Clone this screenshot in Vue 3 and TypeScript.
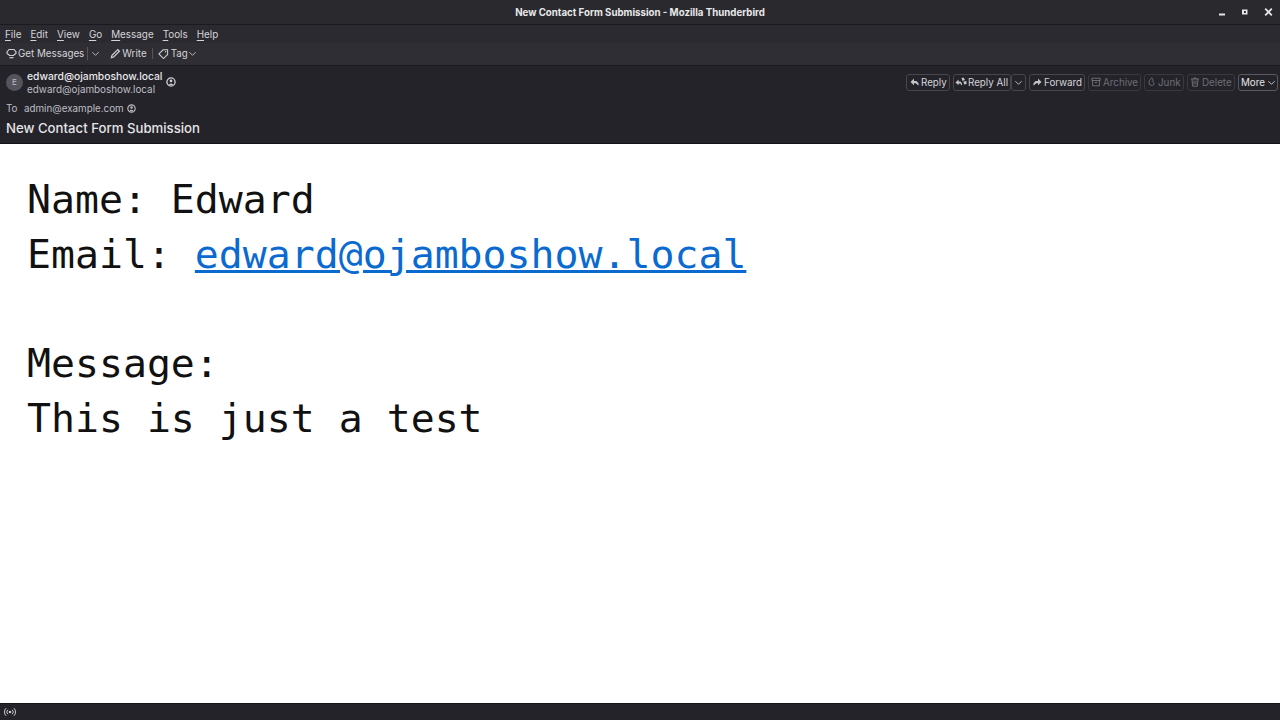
<script setup lang="ts">
const menus = [
  { a: 'F', b: 'ile' }, { a: 'E', b: 'dit' }, { a: 'V', b: 'iew' }, { a: 'G', b: 'o' },
  { a: 'M', b: 'essage' }, { a: 'T', b: 'ools' }, { a: 'H', b: 'elp' },
]
</script>

<template>
  <div class="win">
    <header class="title">
      <span class="title-text">New Contact Form Submission - Mozilla Thunderbird</span>
      <div class="wm">
        <svg width="8" height="10" viewBox="0 0 8 10"><rect x="1" y="6.500" width="6" height="2" fill="#e6e6e6"/></svg>
        <svg width="8" height="10" viewBox="0 0 8 10"><path d="M1 2.500h5.500v5H1z M3 4v2h1.800V4z" fill="#e6e6e6" fill-rule="evenodd"/></svg>
        <svg width="9" height="10" viewBox="0 0 9 10"><path d="M1.200 1.700l6.600 6.600M7.800 1.700l-6.600 6.600" stroke="#e6e6e6" stroke-width="1.800"/></svg>
      </div>
    </header>
    <nav class="menubar">
      <span v-for="m in menus" :key="m.a" class="menu"><u>{{ m.a }}</u>{{ m.b }}</span>
    </nav>
    <div class="toolbar">
      <span class="tool first">
        <svg class="ic" width="11" height="11" viewBox="0 0 11 11"><path d="M1 4 3 1.500h5L10 4v1.200L7.500 7.500h-4L1 5.200z" fill="none" stroke="#d0d0d4" stroke-width="1.200"/><path d="M3.500 9.700h4" stroke="#d0d0d4" stroke-width="1.200"/></svg>
        <span>Get Messages</span>
      </span>
      <span class="sep"></span>
      <svg class="chev" width="9" height="9" viewBox="0 0 10 10"><path d="M1.500 3.500 5 7l3.500-3.500" fill="none" stroke="#c8c8cc"/></svg>
      <span class="tool write">
        <svg class="ic" width="11" height="11" viewBox="0 0 12 12"><path d="M1.500 10.500 2.200 8 8.500 1.700l1.800 1.800L4 9.800z" fill="none" stroke="#cfcfd4" stroke-width="1.300"/></svg>
        <span>Write</span>
      </span>
      <span class="sep short"></span>
      <span class="tool tag">
        <svg class="ic" width="11" height="11" viewBox="0 0 12 12"><path d="M1 6.500 5.500 2H10.500V7L6 11.500z" fill="none" stroke="#cfcfd4" stroke-width="1.100"/><circle cx="8.300" cy="4.200" r=".8" fill="#cfcfd4"/></svg>
        <span>Tag</span>
        <svg class="ic" width="9" height="9" viewBox="0 0 10 10"><path d="M1.500 3.500 5 7l3.500-3.500" fill="none" stroke="#c8c8cc"/></svg>
      </span>
    </div>
    <section class="head">
      <div class="head-top">
        <div class="avatar">E</div>
        <div class="from">
          <div class="from-line">edward@ojamboshow.local</div>
          <div class="from-sub">edward@ojamboshow.local</div>
        </div>
        <svg class="contact from-icon" width="10" height="10" viewBox="0 0 10 10"><circle cx="5" cy="5" r="4.100" fill="none" stroke="#d0d0d4" stroke-width="1.300"/><circle cx="5" cy="3.900" r="1.400" fill="#d0d0d4"/><path d="M2.500 8Q5 5 7.500 8" fill="#d0d0d4"/></svg>
        <div class="actions">
          <span class="btn reply">
            <svg class="ic" width="9" height="10" viewBox="0 0 9 10"><path d="M4 1.500.5 5 4 8.200V6.300h1.800L8.500 8.700V6.200L6.500 4H4z" fill="#c4c4c8"/></svg><span>Reply</span>
          </span>
          <span class="btn replyall">
            <svg class="ic" width="12" height="10" viewBox="0 0 12 10"><path d="M3.500 2.500.5 5.500l3 2.700V6.500h1.800L7 8.700V6.500L5.500 4.500h-2z" fill="#c4c4c8"/><path d="M6.500 1l2-.5L10 3 7.500 4zM8.500 4.500l3-.5V7L9 7.500z" fill="#c4c4c8"/></svg><span>Reply All</span>
          </span>
          <span class="btn mini">
            <svg class="ic" width="9" height="9" viewBox="0 0 10 10"><path d="M1.500 3.500 5 7l3.500-3.500" fill="none" stroke="#c8c8cc"/></svg>
          </span>
          <span class="btn forward">
            <svg class="ic" width="9" height="10" viewBox="0 0 9 10"><path d="M5 1.500 8.500 5 5 8.200V6.300H3.200L.5 8.700V6.200L2.500 4H5z" fill="#c4c4c8"/></svg><span>Forward</span>
          </span>
          <span class="btn off archive">
            <svg class="ic" width="10" height="10" viewBox="0 0 10 10"><path d="M.8 1.200h8.400v2.300H.8zM1.600 3.500v5.300h6.800V3.500M3.800 5.500h2.400" fill="none" stroke="#6f6e74"/></svg><span>Archive</span>
          </span>
          <span class="btn off junk">
            <svg class="ic" width="9" height="10" viewBox="0 0 9 10"><path d="M5 .8C2.500 2.500 1.500 5 2.300 7c.5 1.500 3.500 2.300 4.500.5C7.500 6 6 5.500 6 4.200 6 3 6 2 5 .8z" fill="none" stroke="#6f6e74"/></svg><span>Junk</span>
          </span>
          <span class="btn off del">
            <svg class="ic" width="10" height="10" viewBox="0 0 10 10"><path d="M1 2h8M2 2l.6 7.200h4.800L8 2M4 3.500v4M6 3.500v4M3.800 2V1h2.400v1" fill="none" stroke="#6f6e74"/></svg><span>Delete</span>
          </span>
          <span class="btn more"><span>More</span>
            <svg class="ic" width="9" height="9" viewBox="0 0 10 10"><path d="M1.500 3.500 5 7l3.500-3.500" fill="none" stroke="#d4d4d8"/></svg>
          </span>
        </div>
      </div>
      <div class="to">
        <span class="to-label">To</span>
        <span class="to-addr">admin@example.com</span>
        <svg class="contact" width="9" height="9" viewBox="0 0 10 10"><circle cx="5" cy="5" r="4.100" fill="none" stroke="#bcbcc0" stroke-width="1.300"/><circle cx="5" cy="3.900" r="1.400" fill="#bcbcc0"/><path d="M2.500 8Q5 5 7.500 8" fill="#bcbcc0"/></svg>
      </div>
      <div class="subject">New Contact Form Submission</div>
    </section>
    <main class="body">
      <div class="msg">Name: Edward</div>
      <div class="msg">Email: <a class="link">edward@ojamboshow.local</a></div>
      <div class="msg blank"></div>
      <div class="msg">Message:</div>
      <div class="msg">This is just a test</div>
    </main>
    <footer class="status">
      <svg width="12" height="10" viewBox="0 0 12 10"><circle cx="6" cy="5" r="1.300" fill="#c8c8cc"/><path d="M3.800 2.800a3 3 0 0 0 0 4.400M8.200 2.800a3 3 0 0 1 0 4.400M2 1.200a5.500 5.500 0 0 0 0 7.600M10 1.200a5.500 5.500 0 0 1 0 7.600" fill="none" stroke="#c8c8cc"/></svg>
    </footer>
  </div>
</template>

<style>
html, body { margin: 0; background: #fff; overflow: hidden; }
</style>

<style scoped>
.win {
  width: 1280px;
  height: 720px;
  display: flex;
  flex-direction: column;
  font-family: Inter, "Noto Sans", sans-serif;
  color: #e4e4e7;
  overflow: hidden;
}
.ic { flex: none; }
.title {
  height: 25px;
  box-sizing: border-box;
  flex: none;
  background: #2a292e;
  border-bottom: 1px solid #1b1b1f;
  display: flex;
  align-items: center;
  justify-content: center;
  position: relative;
}
.title-text { font-size: 9.700px; font-weight: 700; color: #e8e8ea; }
.wm {
  position: absolute;
  right: 7px;
  top: 7px;
  display: flex;
  gap: 15px;
}
.menubar {
  height: 18px;
  flex: none;
  background: #2b2a30;
  display: flex;
  align-items: center;
  gap: 9px;
  padding-left: 5px;
  font-size: 9.900px;
  color: #d4d4d8;
}
.menu u { text-underline-offset: 2px; }
.toolbar {
  height: 23px;
  box-sizing: border-box;
  flex: none;
  background: #2f2e34;
  border-bottom: 1px solid #1b1b1f;
  display: flex;
  align-items: center;
  padding: 0 0 1px 6px;
  font-size: 9.800px;
  color: #d4d4d8;
}
.tool { display: flex; align-items: center; gap: 1px; white-space: nowrap; }
.sep { width: 1px; height: 13px; background: #55545a; margin-left: 3px; flex: none; }
.sep.short { height: 11px; margin-left: 5px; }
.chev { margin: 0 10px 0 3px; flex: none; }
.write { gap: 1px; }
.tag { margin-left: 5px; gap: 2px; }
.tag .ic:last-child { margin-left: -2px; }
.head {
  height: 78px;
  flex: none;
  background: #24232a;
  box-sizing: border-box;
  padding: 3px 2px 0 6px;
  display: flex;
  flex-direction: column;
  border-bottom: 1px solid #141417;
}
.head-top { display: flex; align-items: center; height: 26px; }
.avatar {
  width: 17px;
  height: 17px;
  border-radius: 50%;
  background: #55545c;
  color: #bcbcc2;
  font-size: 8px;
  display: flex;
  align-items: center;
  justify-content: center;
  margin-right: 4px;
  flex: none;
}
.from { display: flex; flex-direction: column; padding-top: 1px; }
.from-line { font-size: 10.300px; font-weight: 500; color: #e8e8eb; line-height: 13px; white-space: nowrap; }
.from-sub { font-size: 9.900px; color: #bfbfc4; line-height: 13px; white-space: nowrap; }
.from-icon { margin-left: 4px; margin-top: -1px; flex: none; }
.actions { margin-left: auto; display: flex; gap: 3px; align-items: center; }
.btn {
  height: 17px;
  box-sizing: border-box;
  display: flex;
  align-items: center;
  justify-content: flex-start;
  gap: 2px;
  padding-left: 3px;
  border: 1px solid #47464d;
  border-radius: 3px;
  font-size: 9.800px;
  color: #d4d4d8;
  white-space: nowrap;
}
.reply { width: 44px; }
.replyall { width: 58px; gap: 1px; padding-left: 1px; }
.mini { width: 15px; margin-left: -3px; padding-left: 2px; }
.forward { width: 56px; }
.archive { width: 53px; padding-left: 2px; }
.junk { width: 40px; padding-left: 2px; }
.del { width: 48px; padding-left: 2px; }
.more { width: 40px; padding-left: 2px; }
.btn.off { color: #6f6e74; border-color: #3a3940; }
.btn.more { border-color: #5a595f; gap: 2px; color: #e4e4e7; }
.to {
  height: 14px;
  margin-top: 6px;
  display: flex;
  align-items: center;
  gap: 3px;
  font-size: 9.800px;
  color: #bfbfc4;
}
.to-label { width: 15px; margin-right: 0; }
.subject {
  margin-top: 4px;
  font-size: 13.200px;
  font-weight: 500;
  color: #e4e4e7;
  line-height: 18px;
}
.body {
  flex: 1;
  background: #fff;
  min-height: 0;
  padding: 28px 0 0 27px;
}
.msg {
  font-family: "DejaVu Sans Mono", monospace;
  font-size: 39.840px;
  line-height: 54.700px;
  height: 54.700px;
  color: #111;
  white-space: pre;
}
.link { color: #0b6ad0; text-decoration: underline; }
.status {
  height: 17px;
  box-sizing: border-box;
  flex: none;
  background: #24232a;
  border-top: 1px solid #141417;
  display: flex;
  align-items: center;
  padding-left: 4px;
}
</style>
